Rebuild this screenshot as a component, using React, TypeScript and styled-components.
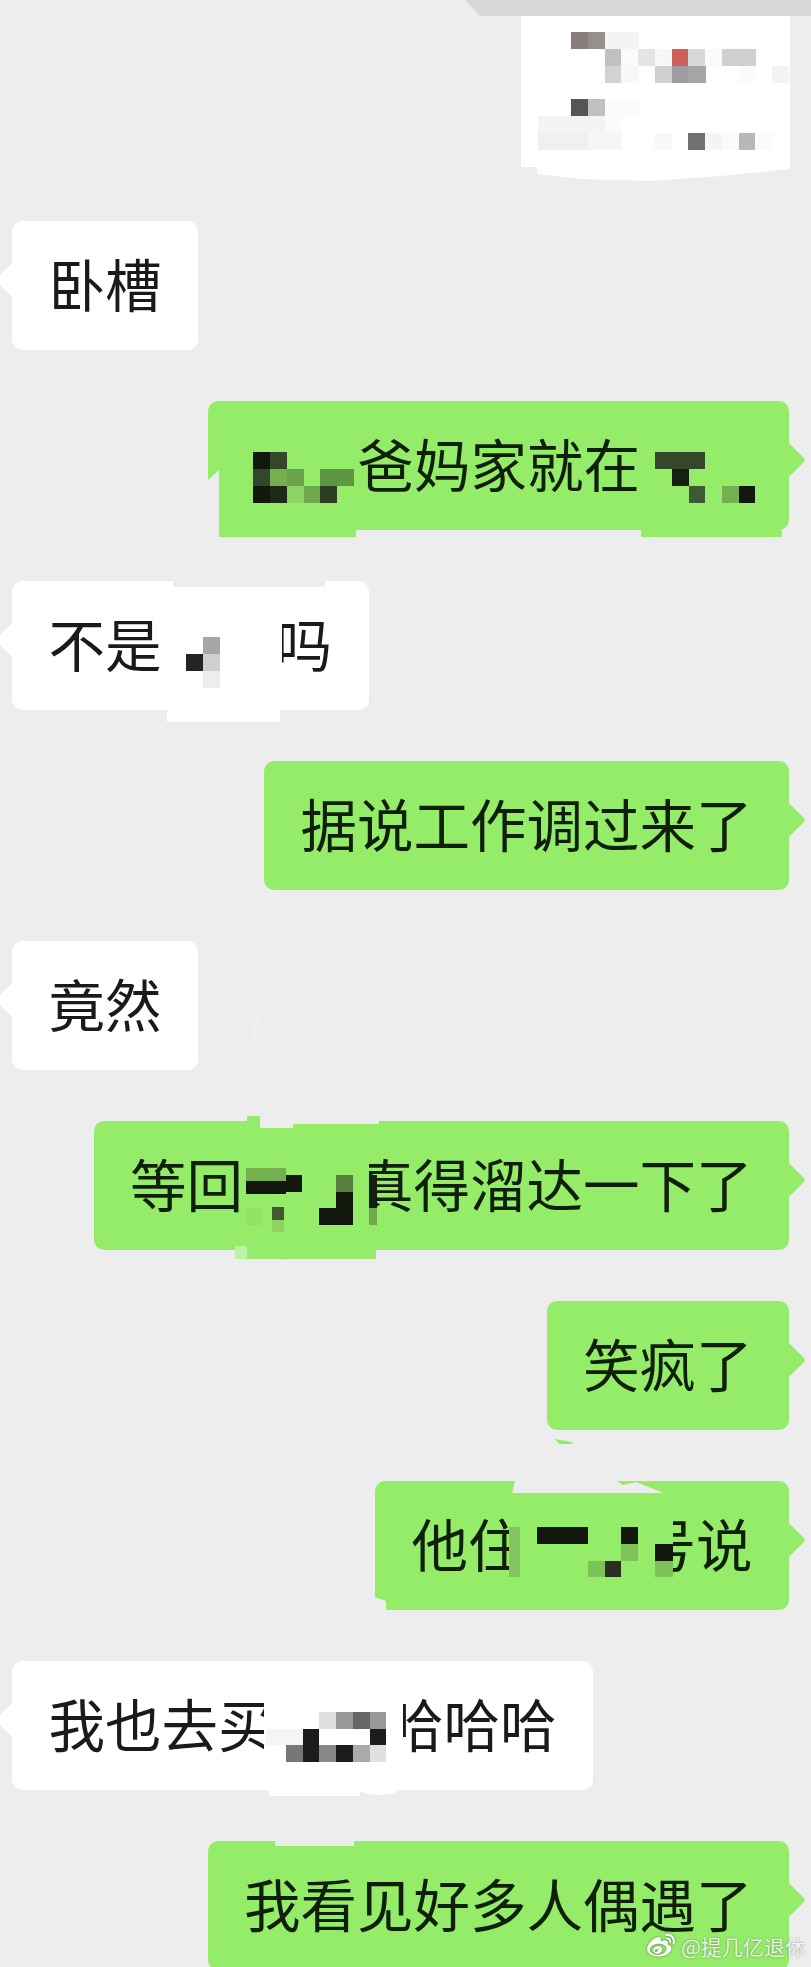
import styled, { createGlobalStyle } from "styled-components";
import { FaWeibo } from "react-icons/fa";

const BG = "#ededed";
const GREEN = "#95ec69";
const WHITE = "#ffffff";
const DARK = "#12180e";

const GlobalStyle = createGlobalStyle`
  html, body {
    margin: 0;
    padding: 0;
    background: ${BG};
  }
`;

const Page = styled.div`
  background: ${BG};
  color: #1a1a1a;
  display: flex;
  flex-direction: column;
  font-family: "Noto Sans CJK SC", "Noto Sans", sans-serif;
  height: 1967px;
  overflow: hidden;
  position: relative;
  width: 811px;
`;

const TopBar = styled.div`
  background: #d8d8d8;
  clip-path: polygon(0 0, 100% 0, 100% 100%, 15px 100%);
  flex: none;
  height: 16px;
  margin-left: 465px;
  width: 346px;
`;

const PhotoBubble = styled.div`
  background: ${WHITE};
  clip-path: polygon(0 0, 269px 0, 269px 153px, 200px 160px, 130px 165px, 60px 163px, 16px 158px, 16px 151px, 0 151px);
  flex: none;
  height: 165px;
  margin: 0 0 40px 521px;
  width: 269px;
`;

const Messages = styled.div`
  display: flex;
  flex-direction: column;
  gap: 51px;
  padding: 0 22px 0 12px;
`;

const Row = styled.div<{ $mine?: boolean }>`
  display: flex;
  flex: none;
  justify-content: ${(p) => (p.$mine ? "flex-end" : "flex-start")};
`;

const Bubble = styled.div<{ $mine?: boolean }>`
  align-items: center;
  background: ${(p) => (p.$mine ? GREEN : WHITE)};
  border-radius: 10px;
  color: ${(p) => (p.$mine ? "#0f1f0a" : "#1a1a1a")};
  display: flex;
  font-size: 56.5px;
  height: 129px;
  line-height: 1;
  padding: 0 36.5px;
  position: relative;
  white-space: nowrap;

  &::after {
    background: inherit;
    border-radius: 3px;
    content: "";
    height: 24px;
    position: absolute;
    top: 47px;
    transform: rotate(45deg);
    width: 24px;
    ${(p) => (p.$mine ? "right: -12px;" : "left: -12px;")}
  }
`;

const Label = styled.span`
  display: block;
  flex: none;
  padding-bottom: 7px;
`;

const Patch = styled.div<{
  $left: number;
  $top: number;
  $w: number;
  $h: number;
  $color: string;
  $clip?: string;
  $round?: boolean;
}>`
  background: ${(p) => p.$color};
  ${(p) => (p.$clip ? `clip-path: polygon(${p.$clip});` : "")}
  ${(p) => (p.$round ? "border-radius: 50%;" : "")}
  height: ${(p) => p.$h}px;
  left: ${(p) => p.$left}px;
  position: absolute;
  top: ${(p) => p.$top}px;
  width: ${(p) => p.$w}px;
  z-index: 2;
`;

const MosaicSvg = styled.svg<{ $ml?: number; $mr?: number }>`
  display: block;
  flex: none;
  margin-left: ${(p) => p.$ml ?? 0}px;
  margin-right: ${(p) => p.$mr ?? 0}px;
  position: relative;
  z-index: 1;
`;

const Scratches = styled.svg`
  left: 0;
  pointer-events: none;
  position: absolute;
  top: 0;
`;

const Watermark = styled.div`
  align-items: center;
  color: rgba(255, 255, 255, 0.88);
  display: flex;
  font-size: 21px;
  gap: 6px;
  left: 647px;
  line-height: 1;
  position: absolute;
  text-shadow: 0 0 2px rgba(0, 0, 0, 0.45);
  top: 1932px;
  white-space: nowrap;
  z-index: 3;

  svg {
    filter: drop-shadow(0 0 1px rgba(0, 0, 0, 0.5));
  }
`;

// x, y, w, h, colour, in the coordinates of the viewBox
type Block = [number, number, number, number, string];

const Mosaic = ({
  x,
  y,
  w,
  h = 129,
  blocks,
  cover,
  ml,
  mr,
}: {
  x: number;
  y: number;
  w: number;
  h?: number;
  blocks: Block[];
  cover?: string;
  ml?: number;
  mr?: number;
}) => (
  <MosaicSvg width={w} height={h} viewBox={`${x} ${y} ${w} ${h}`} shapeRendering="crispEdges" $ml={ml} $mr={mr}>
    {cover && <rect x={x} y={y} width={w} height={h} fill={cover} />}
    {blocks.map((b, i) => (
      <rect key={i} x={b[0]} y={b[1]} width={b[2]} height={b[3]} fill={b[4]} />
    ))}
  </MosaicSvg>
);

const gridBlocks = (x: number, y: number, size: number, rows: string[]): Block[] =>
  rows.flatMap((row, r) =>
    row
      .split(" ")
      .map((c, i): Block | null =>
        c === "." || c === "" ? null : [x + i * size, y + r * size, size + 0.5, size + 0.5, `#${c}`]
      )
      .filter((b): b is Block => b !== null)
  );

const photoBlocks = gridBlocks(537.5, 32, 16.75, [
  ". . 8a7c78 96908c f4f4f4 f4f4f4",
  ". . . . c0c0c2 fbfbfb e5e5e5 f7f7f7 cc6057 d8d8d8 fbfbfb d0d0d0 d0d0d0",
  ". . . . d2d2d4 f8f8fa . d0d0d2 9e9ea2 a6a6a8 . . fbfbfb . f3f3f3",
  "",
  ". . 555555 c0c0c0 fbfbfb fbfbfb",
  "f4f4f4 f4f4f4 f4f4f4 f4f4f4 fbfbfb",
  "f0f0f0 f0f0f0 f0f0f0 f6f6f6 f6f6f6 . . f8f8f8 . 707070 f4f4f4 fbfbfb b8b8b8 fbfbfb",
]);

const parentsLeft: Block[] = [
  [252, 452, 17, 17, DARK],
  [269, 452, 17, 17, "#33482a"],
  [252, 469, 17, 17, "#33482a"],
  [269, 469, 17, 17, "#74b04f"],
  [286, 469, 17, 17, "#69a24a"],
  [319, 469, 34, 17, "#5f9642"],
  [252, 486, 17, 17, DARK],
  [269, 486, 17, 17, "#1d2a17"],
  [286, 486, 17, 17, "#8cd362"],
  [303, 486, 17, 17, "#6da84c"],
  [319, 486, 17, 17, "#2a3d20"],
];

const parentsRight: Block[] = [
  [655, 452, 50, 17, "#33482a"],
  [672, 469, 17, 17, "#152012"],
  [689, 486, 16, 17, "#3f5a30"],
  [722, 486, 17, 17, "#74b04f"],
  [739, 486, 16, 17, DARK],
];

const isBlocks: Block[] = [
  [202, 637, 17, 17, "#a6a6a6"],
  [185, 654, 17, 17, "#242424"],
  [202, 654, 17, 17, "#cfcfcf"],
  [202, 671, 17, 17, "#ededed"],
];

const backBlocks: Block[] = [
  [350, 1130, 19, 110, GREEN],
  [246, 1168, 40, 13, "#74b04f"],
  [246, 1181, 40, 13, DARK],
  [286, 1175, 16, 17, DARK],
  [272, 1207, 12, 13, "#3f5a30"],
  [272, 1220, 12, 12, "#8cd362"],
  [246, 1208, 16, 17, "#8fe365"],
  [319, 1208, 34, 17, DARK],
  [336, 1192, 17, 16, DARK],
  [336, 1175, 17, 17, "#55803d"],
  [369, 1175, 8, 33, "#12200f"],
  [369, 1208, 8, 17, "#6da84c"],
];

const liveBlocks: Block[] = [
  [509, 1527, 11, 50, "#83c45f"],
  [537, 1527, 51, 17, DARK],
  [621, 1527, 17, 17, DARK],
  [621, 1544, 17, 17, "#7ec45a"],
  [588, 1561, 17, 16, "#7cc258"],
  [605, 1561, 16, 16, "#2a2f20"],
  [655, 1544, 18, 17, DARK],
  [655, 1561, 18, 16, "#7cc258"],
];

const buyBlocks: Block[] = [
  [319, 1712, 17, 17, "#e0e0e0"],
  [336, 1712, 17, 17, "#999999"],
  [353, 1712, 17, 17, "#666666"],
  [370, 1712, 16, 17, "#999999"],
  [266, 1729, 37, 16, "#f5f5f5"],
  [303, 1729, 16, 16, "#1c1c1c"],
  [370, 1729, 16, 16, "#1c1c1c"],
  [286, 1745, 17, 17, "#777777"],
  [303, 1745, 16, 17, "#1c1c1c"],
  [319, 1745, 17, 17, "#888888"],
  [336, 1745, 17, 17, "#1c1c1c"],
  [353, 1745, 17, 17, "#aaaaaa"],
  [370, 1745, 16, 17, "#e0e0e0"],
];

const App = () => (
  <Page>
    <GlobalStyle />
    <TopBar />
    <PhotoBubble>
      <Mosaic x={521} y={16} w={269} h={165} blocks={photoBlocks} />
    </PhotoBubble>

    <Messages>
      <Row>
        <Bubble>
          <Label>卧槽</Label>
        </Bubble>
      </Row>

      <Row $mine>
        <Bubble $mine>
          <Mosaic x={244} y={401} w={113} blocks={parentsLeft} />
          <Label>爸妈家就在</Label>
          <Mosaic x={640} y={401} w={115} blocks={parentsRight} mr={-2.5} />
          <Patch $left={0} $top={69} $w={11} $h={60} $color={BG} $clip="0 10px, 100% 0, 100% 100%, 0 100%" />
          <Patch $left={11} $top={129} $w={137} $h={7} $color={GREEN} />
          <Patch $left={433} $top={129} $w={141} $h={7} $color={GREEN} />
        </Bubble>
      </Row>

      <Row>
        <Bubble>
          <Label>不是</Label>
          <Mosaic x={161} y={581} w={120} blocks={isBlocks} cover={WHITE} mr={-6} />
          <Label>吗</Label>
          <Patch $left={161} $top={0} $w={152} $h={6} $color={BG} />
          <Patch $left={155} $top={129} $w={113} $h={12} $color={WHITE} />
        </Bubble>
      </Row>

      <Row $mine>
        <Bubble $mine>
          <Label>据说工作调过来了</Label>
        </Bubble>
      </Row>

      <Row>
        <Bubble>
          <Label>竟然</Label>
        </Bubble>
      </Row>

      <Row $mine>
        <Bubble $mine>
          <Label>等回</Label>
          <Mosaic x={243} y={1121} w={134} blocks={backBlocks} mr={-20} />
          <Label>真得溜达一下了</Label>
          <Patch $left={153} $top={-5} $w={13} $h={5} $color={GREEN} />
          <Patch $left={166} $top={0} $w={33} $h={7} $color={BG} />
          <Patch $left={199} $top={0} $w={86} $h={3} $color={BG} />
          <Patch $left={153} $top={129} $w={129} $h={9} $color={GREEN} />
          <Patch $left={141} $top={125} $w={12} $h={13} $color="#bdf3a4" />
        </Bubble>
      </Row>

      <Row $mine>
        <Bubble $mine>
          <Label>笑疯了</Label>
          <Patch $left={8} $top={138} $w={18} $h={5} $color={GREEN} $clip="0 0, 100% 60%, 100% 100%, 30% 100%" />
        </Bubble>
      </Row>

      <Row $mine>
        <Bubble $mine>
          <Label>他住</Label>
          <Mosaic x={509} y={1481} w={164} blocks={liveBlocks} cover={GREEN} ml={-15.5} mr={-33.5} />
          <Label>号说</Label>
          <Patch
            $left={136}
            $top={0}
            $w={151}
            $h={12}
            $color={BG}
            $clip="1px 12px, 4px 0, 106px 0, 112px 4px, 125px 1px, 150px 11px, 151px 12px"
          />
          <Patch $left={0} $top={116} $w={11} $h={13} $color={BG} $clip="0 0, 100% 30%, 100% 100%, 0 100%" />
        </Bubble>
      </Row>

      <Row>
        <Bubble>
          <Label>我也去买</Label>
          <Mosaic x={264} y={1661} w={139} blocks={buyBlocks} cover={WHITE} ml={-10.5} mr={-16} />
          <Label>哈哈哈</Label>
          <Patch $left={257} $top={129} $w={91} $h={6} $color={WHITE} />
          <Patch $left={348} $top={124} $w={38} $h={10} $color={WHITE} $round />
        </Bubble>
      </Row>

      <Row $mine>
        <Bubble $mine>
          <Label>我看见好多人偶遇了</Label>
          <Patch $left={67} $top={0} $w={79} $h={5} $color={BG} />
        </Bubble>
      </Row>
    </Messages>

    <Scratches width={811} height={1967} viewBox="0 0 811 1967" fill="none" stroke="#f3f3f3" strokeWidth="1">
      <path d="M253 1118 L255 1030 L258 1012 L268 1012 L278 1040 L278 1060 L300 1070 L302 1085 L294 1120" />
      <path d="M235 1260 L235 1400 L243 1405 L246 1380 L252 1380 L252 1440 L268 1452 L273 1435 L268 1335 L285 1315 L285 1260" />
    </Scratches>

    <Watermark>
      <FaWeibo size={28} color="#ffffff" />
      <span>@提几亿退休</span>
    </Watermark>
  </Page>
);

export default App;
